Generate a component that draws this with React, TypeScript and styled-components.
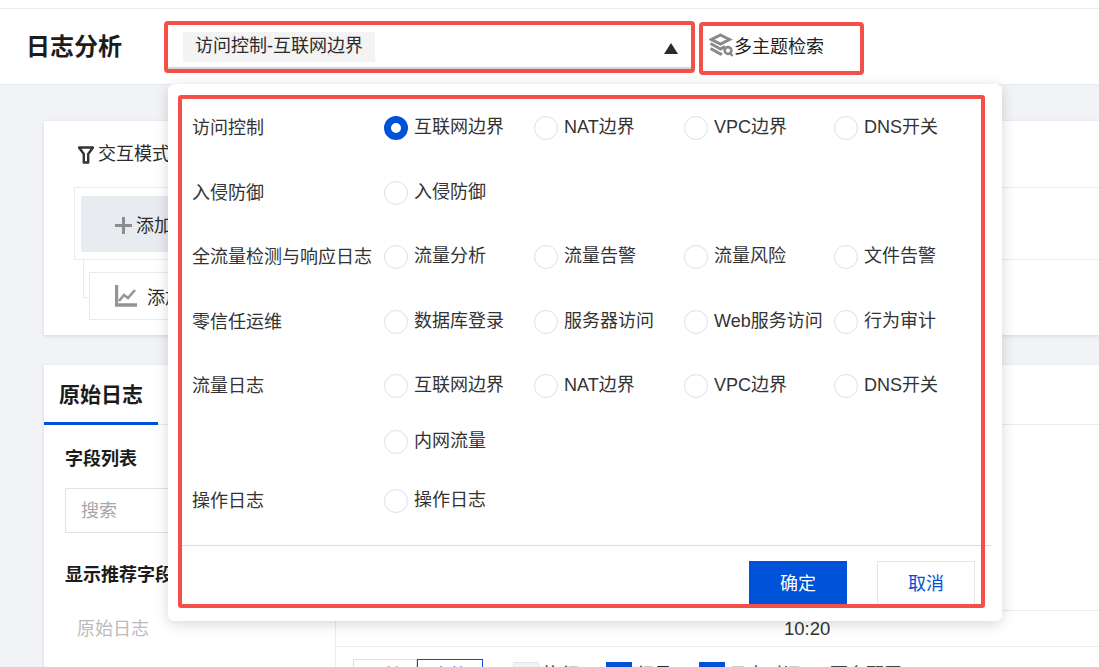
import React from "react";
import styled, { createGlobalStyle } from "styled-components";

const GlobalStyle = createGlobalStyle`
  html, body {
    margin: 0;
    padding: 0;
    height: 667px;
    overflow: hidden;
    background: #f2f3f7;
    font-family: "Liberation Sans", "Noto Sans CJK SC", sans-serif;
    color: #2b2b2b;
  }
  * { box-sizing: border-box; }
`;

const Page = styled.div`
  position: relative;
  width: 1099px;
  height: 667px;
  overflow: hidden;
`;

const TopStrip = styled.div`
  height: 9px;
  background: #fff;
  border-bottom: 1px solid #e7eaef;
`;

const Header = styled.header`
  height: 76px;
  background: #fff;
  border-bottom: 1px solid #e7eaef;
  display: flex;
  align-items: flex-start;
  padding-left: 26px;
`;

const Title = styled.h1`
  width: 138px;
  margin: 20px 0 0;
  font-size: 24px;
  line-height: 36px;
  font-weight: 700;
  color: #1c1c1c;
`;

const SelectBox = styled.div`
  width: 531px;
  height: 52px;
  margin-top: 12px;
  padding: 7px 13px 7px 15px;
  border: 4px solid #f4504a;
  border-radius: 4px;
  display: flex;
  align-items: flex-start;
  justify-content: space-between;
  box-shadow: inset 0 -2px 0 #d5d5d5;
`;

const Tag = styled.span`
  height: 30px;
  padding: 0 12px;
  background: #f3f3f3;
  font-size: 18px;
  line-height: 29px;
  color: #2b2b2b;
`;

const Caret = styled.span`
  width: 0;
  height: 0;
  margin: 11px 0 0;
  border-left: 7px solid transparent;
  border-right: 7px solid transparent;
  border-bottom: 11px solid #2b2b2b;
`;

const MultiSearch = styled.div`
  width: 165px;
  height: 53px;
  margin: 13px 0 0 4px;
  padding: 0 0 8px 6px;
  border: 4px solid #f4504a;
  border-radius: 4px;
  display: flex;
  align-items: center;
  font-size: 18px;
  color: #222;
`;

const Main = styled.main`
  padding: 36px 0 0 44px;
`;

const Card = styled.section`
  background: #fff;
  box-shadow: 0 1px 4px rgba(0, 0, 0, 0.12);
`;

const QueryCard = styled(Card)`
  height: 214px;
  margin-bottom: 30px;
  padding-left: 30px;
`;

const ModeRow = styled.div`
  height: 66px;
  padding: 21px 0 0 4px;
  display: flex;
  align-items: flex-start;
  gap: 4px;
  font-size: 18px;
  line-height: 24px;
`;

const QueryBox = styled.div`
  height: 73px;
  padding: 8px 6px;
  border: 1px solid #e7eaef;
  border-right: 0;
`;

const AddButton = styled.div`
  width: 320px;
  height: 56px;
  padding-left: 34px;
  background: #e8ebf0;
  border-radius: 3px;
  display: flex;
  align-items: center;
  gap: 4px;
  font-size: 18px;
`;

const SubBox = styled.div`
  position: relative;
  width: 320px;
  height: 48px;
  margin: 12px 0 0 15px;
  padding-left: 25px;
  border: 1px solid #e7eaef;
  display: flex;
  align-items: center;
  gap: 10px;
  font-size: 18px;
  &::before {
    content: "";
    position: absolute;
    left: -7px;
    top: -13px;
    width: 6px;
    height: 37px;
    border-left: 1px solid #e7eaef;
    border-bottom: 1px solid #e7eaef;
  }
`;

const LogCard = styled(Card)`
  height: 340px;
`;

const Tabs = styled.div`
  height: 60px;
  border-bottom: 1px solid #e7eaef;
`;

const Tab = styled.div`
  width: 114px;
  height: 60px;
  padding: 15px 0 0 15px;
  border-bottom: 3px solid #0052d9;
  font-size: 21px;
  line-height: 30px;
  font-weight: 700;
  color: #1c1c1c;
`;

const LogBody = styled.div`
  display: flex;
  height: 280px;
`;

const Sidebar = styled.aside`
  width: 292px;
  padding: 21px 21px 0;
  border-right: 1px solid #e7eaef;
`;

const SideTitle = styled.div`
  font-size: 18px;
  line-height: 26px;
  font-weight: 700;
  color: #1c1c1c;
`;

const SearchInput = styled.div`
  height: 45px;
  margin: 16px 0 29px;
  padding-left: 15px;
  border: 1px solid #e0e3ea;
  font-size: 18px;
  line-height: 44px;
  color: #a6a6a6;
`;

const SideItem = styled.div`
  margin: 28px 0 0 12px;
  font-size: 18px;
  line-height: 26px;
  color: #bbb;
`;

const Content = styled.div`
  flex: 1;
  padding-top: 185px;
`;

const TimeRow = styled.div`
  height: 37px;
  padding-left: 448px;
  border-top: 1px solid #e7eaef;
  border-bottom: 1px solid #e7eaef;
  font-size: 18.5px;
  line-height: 36px;
  color: #333;
`;

const ViewBar = styled.div`
  display: flex;
  align-items: flex-start;
  padding: 12px 0 0 17px;
  font-size: 18px;
  line-height: 32px;
`;

const Segment = styled.div<{ $active?: boolean }>`
  width: ${(p) => (p.$active ? 66 : 64)}px;
  height: 30px;
  text-align: center;
  border: 1px solid ${(p) => (p.$active ? "#0052d9" : "#dcdfe6")};
  color: ${(p) => (p.$active ? "#0052d9" : "#444")};
`;

const CheckItem = styled.div<{ $on?: boolean; $width: number }>`
  width: ${(p) => p.$width}px;
  display: flex;
  gap: 4px;
  &::before {
    content: "";
    width: 24px;
    height: 24px;
    margin-top: 3px;
    background: ${(p) => (p.$on ? "#0052d9" : "#f3f3f3")};
    border: 1px solid ${(p) => (p.$on ? "#0052d9" : "#e3e5ea")};
  }
`;

const MoreLink = styled.span`
  margin-left: 2px;
  color: #444;
`;

const Popup = styled.div`
  position: absolute;
  left: 168px;
  top: 84px;
  width: 834px;
  height: 537px;
  padding-top: 32px;
  background: #fff;
  border-radius: 6px;
  box-shadow: 0 3px 14px rgba(0, 0, 0, 0.16);
`;

const FormRow = styled.div<{ $gap: number }>`
  display: flex;
  padding-left: 24px;
  margin-bottom: ${(p) => p.$gap}px;
`;

const RowLabel = styled.div`
  width: 192px;
  flex: none;
  font-size: 18px;
  line-height: 24px;
  color: #333;
  white-space: nowrap;
`;

const Options = styled.div`
  display: flex;
  flex-wrap: wrap;
  row-gap: 32px;
  width: 600px;
`;

const Option = styled.label`
  width: 150px;
  height: 24px;
  display: flex;
  gap: 6px;
  font-size: 18px;
  line-height: 23px;
  color: #333;
  white-space: nowrap;
`;

const Radio = styled.span<{ $checked?: boolean }>`
  width: 24px;
  height: 24px;
  flex: none;
  border-radius: 50%;
  border: ${(p) => (p.$checked ? "7px solid #0052d9" : "1px solid #dcdfe8")};
  background: #fff;
`;

const Footer = styled.div`
  width: 810px;
  margin: 32px 0 0 13px;
  padding: 15px 16px 0 0;
  border-top: 1px solid #dcdcdc;
  display: flex;
  justify-content: flex-end;
  gap: 30px;
`;

const FooterButton = styled.button<{ $primary?: boolean }>`
  width: 98px;
  height: 44px;
  padding: 0 0 3px;
  border: 1px solid ${(p) => (p.$primary ? "#0052d9" : "#e3e6ec")};
  border-bottom: 0;
  border-radius: 0;
  background: ${(p) => (p.$primary ? "#0052d9" : "#fff")};
  color: ${(p) => (p.$primary ? "#fff" : "#0052d9")};
  font: inherit;
  font-size: 18px;
`;

const RedFrame = styled.div`
  position: absolute;
  left: 10px;
  top: 11px;
  width: 807px;
  height: 513px;
  border: 4px solid #f4504a;
  border-radius: 3px;
  pointer-events: none;
`;

const FilterIcon = () => (
  <svg width="16" height="18" viewBox="0 0 16 18" style={{ marginTop: 4 }}>
    <path d="M1 1.5h14L10.2 8v8.5H5.8V8z" fill="none" stroke="#333" strokeWidth="2.4" strokeLinejoin="round" />
  </svg>
);

const PlusIcon = () => (
  <svg width="17" height="17" viewBox="0 0 17 17" style={{ marginTop: 3 }}>
    <path d="M8.5 0v17M0 8.5h17" stroke="#8c8c8c" strokeWidth="3" />
  </svg>
);

const ChartIcon = () => (
  <svg width="22" height="22" viewBox="0 0 22 22">
    <path d="M1.5 0v20H22" fill="none" stroke="#949494" strokeWidth="3.4" />
    <path d="M4 16l5-6 4 3 7-8" fill="none" stroke="#949494" strokeWidth="2.5" />
  </svg>
);

const LayersSearchIcon = () => (
  <svg width="25" height="24" viewBox="0 0 24 24">
    <path d="M11 2l9 4.5-9 4.5-9-4.5z" fill="none" stroke="#8a8a8a" strokeWidth="3" />
    <path d="M1 10.5l10 5.5 4.5-2.5M1 15.5l10 5.5 1.5-.8" fill="none" stroke="#8a8a8a" strokeWidth="3" />
    <circle cx="18.5" cy="17.5" r="3.4" fill="none" stroke="#8a8a8a" strokeWidth="2.6" />
    <path d="M20.5 20l2.5 3" stroke="#8a8a8a" strokeWidth="2.6" />
  </svg>
);

const formRows = [
  { label: "访问控制", options: ["互联网边界", "NAT边界", "VPC边界", "DNS开关"], gap: 40.5 },
  { label: "入侵防御", options: ["入侵防御"], gap: 40.5 },
  { label: "全流量检测与响应日志", options: ["流量分析", "流量告警", "流量风险", "文件告警"], gap: 40.5 },
  { label: "零信任运维", options: ["数据库登录", "服务器访问", "Web服务访问", "行为审计"], gap: 40.5 },
  { label: "流量日志", options: ["互联网边界", "NAT边界", "VPC边界", "DNS开关", "内网流量"], gap: 35 },
  { label: "操作日志", options: ["操作日志"], gap: 0 },
];

export default function App() {
  return (
    <Page>
      <GlobalStyle />
      <TopStrip />
      <Header>
        <Title>日志分析</Title>
        <SelectBox>
          <Tag>访问控制-互联网边界</Tag>
          <Caret />
        </SelectBox>
        <MultiSearch>
          <LayersSearchIcon />
          多主题检索
        </MultiSearch>
      </Header>
      <Main>
        <QueryCard>
          <ModeRow>
            <FilterIcon />
            交互模式
          </ModeRow>
          <QueryBox>
            <AddButton>
              <PlusIcon />
              添加
            </AddButton>
          </QueryBox>
          <SubBox>
            <ChartIcon />
            添加
          </SubBox>
        </QueryCard>
        <LogCard>
          <Tabs>
            <Tab>原始日志</Tab>
          </Tabs>
          <LogBody>
            <Sidebar>
              <SideTitle>字段列表</SideTitle>
              <SearchInput>搜索</SearchInput>
              <SideTitle>显示推荐字段</SideTitle>
              <SideItem>原始日志</SideItem>
            </Sidebar>
            <Content>
              <TimeRow>10:20</TimeRow>
              <ViewBar>
                <Segment>原始</Segment>
                <Segment $active>表格</Segment>
                <CheckItem $width={93} style={{ marginLeft: 30 }}>换行</CheckItem>
                <CheckItem $on $width={93}>行号</CheckItem>
                <CheckItem $on $width={129}>日志时间</CheckItem>
                <MoreLink>更多配置</MoreLink>
              </ViewBar>
            </Content>
          </LogBody>
        </LogCard>
      </Main>
      <Popup>
        {formRows.map((row) => (
          <FormRow key={row.label} $gap={row.gap}>
            <RowLabel>{row.label}</RowLabel>
            <Options>
              {row.options.map((opt, i) => (
                <Option key={opt}>
                  <Radio $checked={row.label === "访问控制" && i === 0} />
                  {opt}
                </Option>
              ))}
            </Options>
          </FormRow>
        ))}
        <Footer>
          <FooterButton $primary>确定</FooterButton>
          <FooterButton>取消</FooterButton>
        </Footer>
        <RedFrame />
      </Popup>
    </Page>
  );
}
